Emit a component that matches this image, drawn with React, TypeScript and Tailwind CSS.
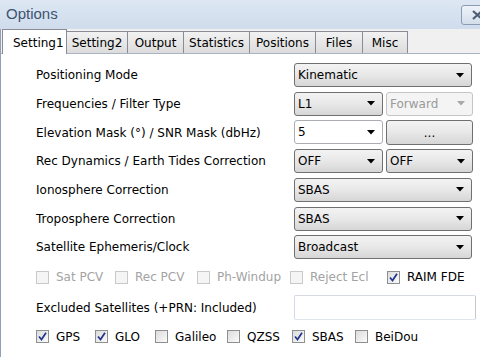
import React from "react";

const Arrow = ({ disabled }: { disabled?: boolean }) => (
  <svg width="8" height="5" viewBox="0 0 8 5" className="shrink-0">
    <path d="M0 0 L8 0 L4 4.5 Z" fill={disabled ? "#a8a8a8" : "#000"} />
  </svg>
);

const Combo = ({ text, w, disabled, edit }: { text: string; w: string; disabled?: boolean; edit?: boolean }) => {
  let cls =
    "h-[24px] flex items-center pl-[3px] pr-[7px] rounded-[3px] border text-[12px] ";
  if (disabled) cls += "border-[#c5c5c5] bg-[#f4f4f4] text-[#9a9a9a]";
  else if (edit) cls += "border-[#abadb3] bg-white text-black rounded-[2px]";
  else cls += "border-[#707070] bg-gradient-to-b from-[#f3f3f3] via-[#e8e8e8] to-[#d6d6d6] text-black";
  return (
    <div className={cls + " " + w}>
      <span className="flex-1 leading-none">{text}</span>
      <Arrow disabled={disabled} />
    </div>
  );
};

const Check = ({ checked, disabled }: { checked?: boolean; disabled?: boolean }) => (
  <div
    className={
      "w-[13px] h-[13px] border shrink-0 flex items-center justify-center " +
      (disabled
        ? "border-[#c9c9c9] bg-[#f5f5f5]"
        : "border-[#8e8f8f] bg-gradient-to-br from-[#dcdcdc] to-[#fbfbfb]")
    }
  >
    {checked && (
      <svg width="9" height="9" viewBox="0 0 9 9">
        <path d="M1 4.5 L3.5 7.5 L8 0.8" stroke="#27368f" strokeWidth="1.8" fill="none" />
      </svg>
    )}
  </div>
);

const CB = ({ label, w, checked, disabled }: { label: string; w?: string; checked?: boolean; disabled?: boolean }) => (
  <div className={"flex items-center gap-[7px] shrink-0 whitespace-nowrap " + (w || "")}>
    <Check checked={checked} disabled={disabled} />
    <span className={"text-[12px] " + (disabled ? "text-[#a3a3a3]" : "text-black")}>{label}</span>
  </div>
);

const Row = ({ label, children }: { label: string; children: React.ReactNode }) => (
  <div className="h-[28.67px] flex items-center">
    <div className="w-[293px] shrink-0 pl-[35px] text-[12px] text-black whitespace-nowrap">{label}</div>
    <div className="flex gap-[3px]">{children}</div>
  </div>
);

const tabs = [
  { t: "Setting1", w: "w-[65px]" },
  { t: "Setting2", w: "w-[61px]" },
  { t: "Output", w: "w-[56px]" },
  { t: "Statistics", w: "w-[66px]" },
  { t: "Positions", w: "w-[66px]" },
  { t: "Files", w: "w-[47px]" },
  { t: "Misc", w: "w-[45px]" },
];

export default function App() {
  return (
    <div
      className="w-[480px] h-[357px] overflow-hidden flex flex-col bg-white"
      style={{ fontFamily: '"DejaVu Sans", Verdana, sans-serif' }}
    >
      <div className="h-[29px] shrink-0 flex items-center bg-gradient-to-b from-[#dde7f3] to-[#cfdcec]">
        <span
          className="pl-[6px] text-[15px] text-[#3e5370]"
          style={{ fontFamily: '"Liberation Sans", Arial, sans-serif' }}
        >
          Options
        </span>
        <div className="ml-auto mr-[-14px] mt-[1px] w-[33px] h-[20px] rounded-[3px] border border-[#8b9bb3] bg-gradient-to-b from-[#eef3f9] to-[#d3deeb] flex items-center pl-[10px]">
          <svg width="12" height="10" viewBox="0 0 12 10">
            <path d="M1 1 L10 9 M10 1 L1 9" stroke="#4d5e75" strokeWidth="2.2" fill="none" />
          </svg>
        </div>
      </div>
      <div className="flex-1 flex flex-col border-l border-[#8fa0b7]">
        <div className="h-[25px] shrink-0 bg-[#f0f0f0] flex items-end pl-[1px] border-b border-[#a9b3c1] relative">
          {tabs.map((tab, i) =>
            i === 0 ? (
              <div
                key={tab.t}
                className={
                  tab.w +
                  " h-[25px] mb-[-1px] bg-white border border-b-0 border-[#898c95] text-[12px] text-black pl-[10px] pt-[4px] relative z-10 whitespace-nowrap"
                }
              >
                {tab.t}
              </div>
            ) : (
              <div
                key={tab.t}
                className={
                  tab.w +
                  " h-[22px] bg-gradient-to-b from-[#f2f2f2] to-[#dcdcdc] border border-b-0 border-l-0 border-[#898c95] text-[12px] text-black flex items-center justify-center whitespace-nowrap"
                }
              >
                {tab.t}
              </div>
            )
          )}
        </div>
        <div className="flex-1 flex flex-col pt-[7px]">
          <Row label="Positioning Mode">
            <Combo text="Kinematic" w="w-[178px]" />
          </Row>
          <Row label="Frequencies / Filter Type">
            <Combo text="L1" w="w-[89px]" />
            <Combo text="Forward" w="w-[87px]" disabled />
          </Row>
          <Row label="Elevation Mask (°) / SNR Mask (dbHz)">
            <Combo text="5" w="w-[89px]" edit />
            <div className="w-[87px] h-[25px] rounded-[3px] border border-[#707070] bg-gradient-to-b from-[#f3f3f3] via-[#e8e8e8] to-[#d6d6d6] flex items-center justify-center text-[12px] text-black">
              ...
            </div>
          </Row>
          <Row label="Rec Dynamics / Earth Tides Correction">
            <Combo text="OFF" w="w-[89px]" />
            <Combo text="OFF" w="w-[87px]" />
          </Row>
          <Row label="Ionosphere Correction">
            <Combo text="SBAS" w="w-[178px]" />
          </Row>
          <Row label="Troposphere Correction">
            <Combo text="SBAS" w="w-[178px]" />
          </Row>
          <Row label="Satellite Ephemeris/Clock">
            <Combo text="Broadcast" w="w-[178px]" />
          </Row>
          <div className="h-[31px] flex items-center pl-[35px]">
            <CB label="Sat PCV" w="w-[79px]" disabled />
            <CB label="Rec PCV" w="w-[82px]" disabled />
            <CB label="Ph-Windup" w="w-[93px]" disabled />
            <CB label="Reject Ecl" w="w-[97px]" disabled />
            <CB label="RAIM FDE" checked />
          </div>
          <div className="h-[30px] flex items-center">
            <div className="w-[293px] shrink-0 pl-[35px] text-[12px] text-black whitespace-nowrap">
              Excluded Satellites (+PRN: Included)
            </div>
            <div className="w-[182px] h-[25px] border border-[#d6dbe3] border-r-[#c8c8c8] border-b-[#dfe5ee] bg-white rounded-[2px]" />
          </div>
          <div className="h-[28px] flex items-center pl-[35px]">
            <CB label="GPS" w="w-[59px]" checked />
            <CB label="GLO" w="w-[60px]" checked />
            <CB label="Galileo" w="w-[72px]" />
            <CB label="QZSS" w="w-[65px]" />
            <CB label="SBAS" w="w-[63px]" checked />
            <CB label="BeiDou" />
          </div>
        </div>
      </div>
    </div>
  );
}
